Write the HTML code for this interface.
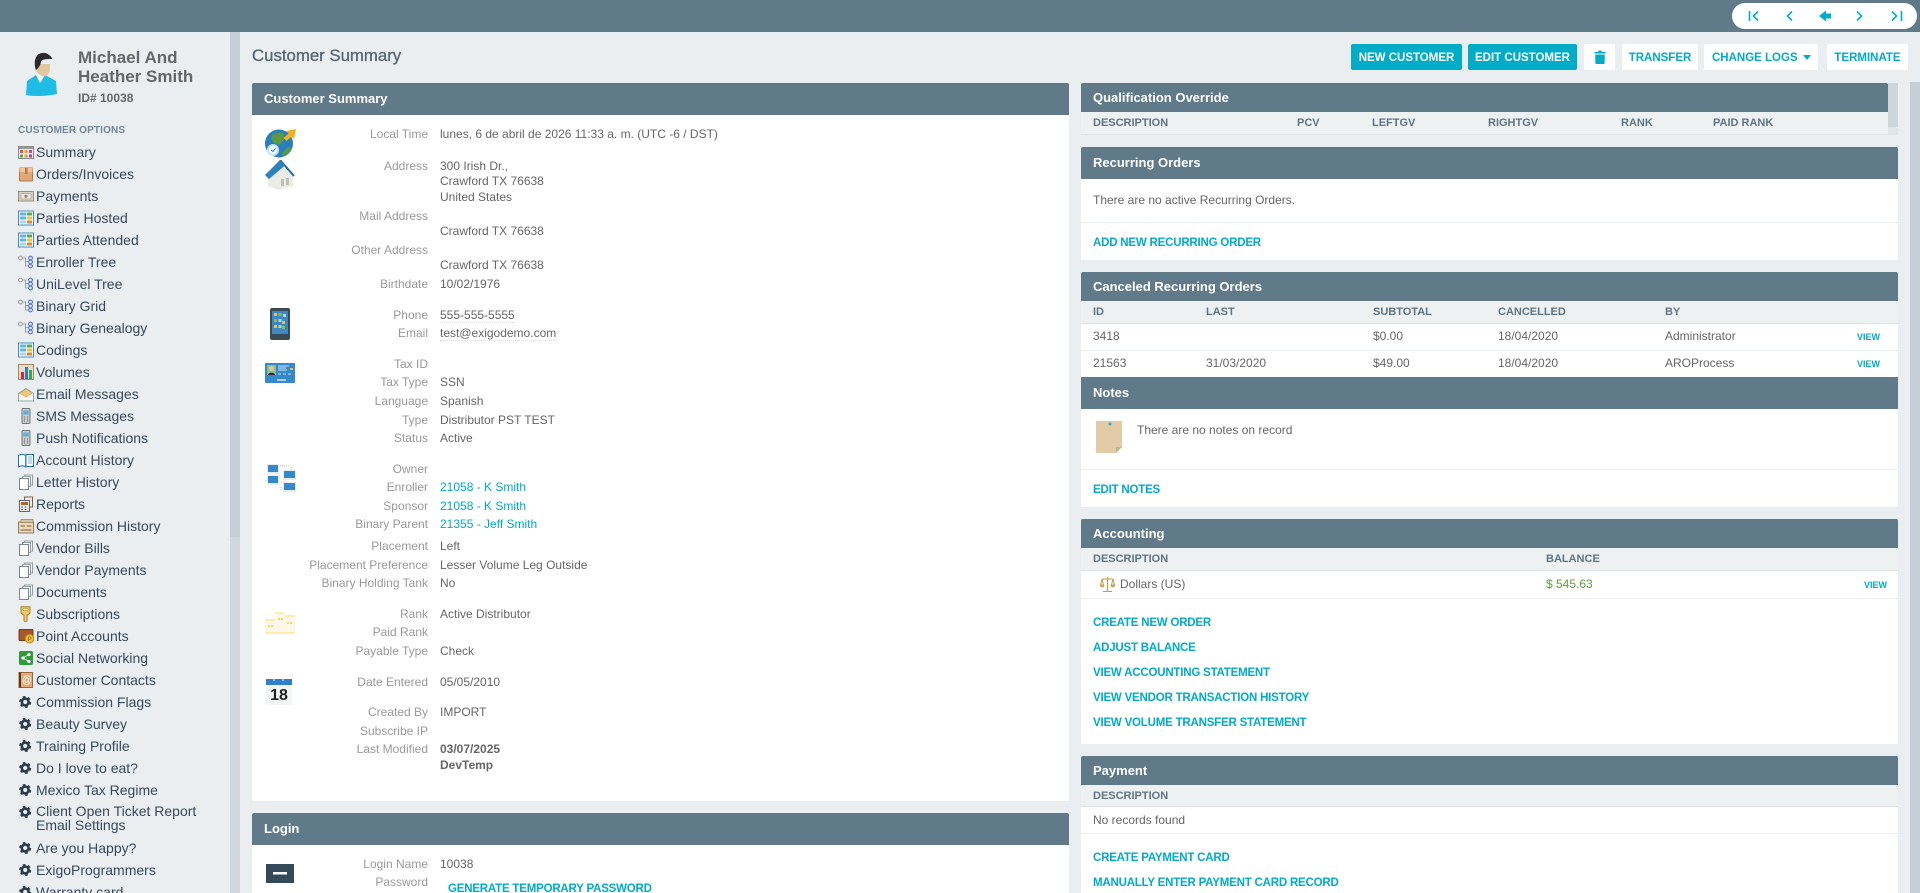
<!DOCTYPE html>
<html><head><meta charset="utf-8"><title>Customer Summary</title>
<style>
*{box-sizing:border-box}
html,body{margin:0;padding:0;width:1920px;height:893px;overflow:hidden;background:#ebeef1;font-family:"Liberation Sans",sans-serif;font-size:12px;color:#666}
div,a,svg{position:absolute}
a{text-decoration:none;color:#00acc8;white-space:nowrap}
#r{left:0;top:0;width:1920px;height:893px;overflow:hidden;background:#ebeef1}
.hd{background:#607a89;color:#fff;font-weight:bold;font-size:13px;line-height:30px;padding-left:12px;border-radius:2px 2px 0 0}
.w{background:#fff}
.th{background:#eef1f2;border-bottom:1px solid #dfe3e6}
.t{font-family:"Liberation Sans Narrow","Liberation Sans",sans-serif;font-weight:bold;font-size:11px;line-height:14px;color:#5f7583;white-space:nowrap}
.l{right:1492px;width:200px;text-align:right;color:#999;line-height:16px;white-space:nowrap}
.v{left:440px;line-height:16px;white-space:nowrap}
.k{line-height:16px;white-space:nowrap}
.lk{font-weight:bold;font-size:11.5px;line-height:16px;left:1093px;letter-spacing:-.2px;margin-top:1px}
.vw{font-size:9px;font-weight:bold;line-height:16px}
.b{top:44px;height:26px;background:#fff;border-radius:2px;color:#00acc8;font-weight:bold;font-size:11.5px;line-height:28px;text-align:center;white-space:nowrap}
.bp{background:#00acc8;color:#fff}
.m{left:36px;font-size:14px;line-height:16px;color:#36495a;white-space:nowrap}
.i{left:18px;width:16px;height:16px}
.line{height:1px;background:#eceff1}
</style></head><body>
<svg width="0" height="0" style="position:absolute">
<defs>
<symbol id="sum" viewBox="0 0 16 16"><rect x=".5" y="2.5" width="15" height="12" fill="#eee" stroke="#8a8a8a"/><rect x="1" y="3" width="14" height="2" fill="#999"/><rect x="2" y="6" width="3" height="3" fill="#d9534f"/><rect x="6.5" y="6" width="3" height="3" fill="#e0a030"/><rect x="11" y="6" width="3" height="3" fill="#c050a0"/><rect x="2" y="10.5" width="3" height="3" fill="#60a060"/><rect x="6.5" y="10.5" width="3" height="3" fill="#d9a040"/><rect x="11" y="10.5" width="3" height="3" fill="#b040b0"/></symbol>
<symbol id="box" viewBox="0 0 16 16"><rect x="1.5" y="2" width="13" height="13" rx="1" fill="#e0a878" stroke="#b47a48"/><rect x="1.5" y="2" width="13" height="4" fill="#efc39c"/><rect x="7" y="2" width="2.5" height="6" fill="#b47a48"/></symbol>
<symbol id="pay" viewBox="0 0 16 16"><rect x=".5" y="3.5" width="15" height="9.5" fill="#d8d0c4" stroke="#9b8f80"/><rect x="3" y="5.5" width="10" height="5.5" fill="#eee8dc" stroke="#a59a88" stroke-width=".6"/><circle cx="8" cy="8.2" r="1.6" fill="#888"/></symbol>
<symbol id="grid" viewBox="0 0 16 16"><rect x=".5" y="1" width="15" height="14" fill="#fff" stroke="#4a88b8"/><rect x="2" y="2.5" width="6" height="3" fill="#5db7e8"/><rect x="9" y="2.5" width="5" height="3" fill="#5aa84f"/><rect x="2" y="6.5" width="6" height="3" fill="#5db7e8"/><rect x="9" y="6.5" width="5" height="3" fill="#e8c83a"/><rect x="2" y="10.5" width="6" height="3" fill="#a8d8f0"/><rect x="9" y="10.5" width="5" height="3" fill="#d88a30"/></symbol>
<symbol id="tree" viewBox="0 0 16 16"><path d="M3 4H8.500M7.500 4V12H11M7.500 7.500H11" fill="none" stroke="#8a8f96" stroke-width=".8"/><circle cx="2.500" cy="4" r="1.900" fill="#eee" stroke="#999"/><circle cx="12.500" cy="4" r="1.900" fill="#dfe7fb" stroke="#4a68d0"/><circle cx="12.500" cy="8" r="1.900" fill="#dfe7fb" stroke="#4a68d0"/><circle cx="12.500" cy="12" r="1.900" fill="#dfe7fb" stroke="#4a68d0"/></symbol>
<symbol id="chart" viewBox="0 0 16 16"><rect x=".5" y=".5" width="15" height="15" fill="#e9dcc8" stroke="#a08868"/><rect x="3" y="8" width="3" height="7" fill="#d02a2a"/><rect x="7" y="3" width="3" height="12" fill="#2a7cc8"/><rect x="11" y="6" width="3" height="9" fill="#3aa84a"/></symbol>
<symbol id="mail" viewBox="0 0 16 16"><path d="M.5 7.500L8 2.500l7.500 5v7.500H.5z" fill="#f6f8f8" stroke="#8fa8a8"/><path d="M2 7.500L8 3l6 4.500L8 11z" fill="#f2c878" stroke="#d8a84c" stroke-width=".6"/></symbol>
<symbol id="ph" viewBox="0 0 16 16"><rect x="4" y=".5" width="8" height="15" rx="1" fill="#c9c9c9" stroke="#70787c"/><rect x="5.300" y="2.500" width="5.400" height="4" fill="#5ab0e0"/><path d="M6 9h1M9 9h1M6 11h1M9 11h1M6 13h1M9 13h1" stroke="#666"/></symbol>
<symbol id="book" viewBox="0 0 16 16"><path d="M.5 3.500C3 2 5.500 2 7.700 3.500V15C5.500 13.600 3 13.600.5 15z" fill="#f4f8fb" stroke="#2a70a8"/><path d="M8 2.500h7.500V14.500H8z" fill="#fff" stroke="#2a70a8"/><path d="M10 5h4M10 7h4M10 9h4M10 11h4" stroke="#8ab0cc"/></symbol>
<symbol id="doc" viewBox="0 0 16 16"><rect x="6.500" y="1" width="8" height="10" fill="#f8f8f8" stroke="#90a0a0"/><rect x="4.500" y="2.500" width="8" height="10" fill="#f8f8f8" stroke="#90a0a0"/><rect x="1.500" y="4.500" width="9" height="11" fill="#fff" stroke="#7a8a8a"/></symbol>
<symbol id="rep" viewBox="0 0 16 16"><rect x="6.500" y="1" width="8" height="10" fill="#eee" stroke="#806040"/><rect x="1.500" y="4.500" width="10" height="11" fill="#eee" stroke="#666"/><rect x="3" y="6" width="7" height="3" fill="#a06a30"/><path d="M3 11h2M6.500 11h2M3 13.500h2M6.500 13.500h2" stroke="#666"/></symbol>
<symbol id="com" viewBox="0 0 16 16"><rect x=".5" y="4" width="15" height="11" fill="#ead9c0" stroke="#907858"/><rect x="3" y="1.500" width="12" height="3" fill="#d8c4a4" stroke="#907858" stroke-width=".7"/><rect x="2.500" y="7" width="4.500" height="2" fill="#b89a70"/><rect x="9" y="7" width="4.500" height="2" fill="#b89a70"/><rect x="2.500" y="11" width="11" height="2" fill="#b89a70"/></symbol>
<symbol id="key" viewBox="0 0 16 16"><path d="M3 .7h9v6.500l-3 2v6l-1.500 1-1.500-1.500v-5.500l-3-2z" fill="#f0ca60" stroke="#a88428"/><rect x="5" y="2.500" width="5" height="2" fill="#fff6c8" stroke="#a88428" stroke-width=".5"/></symbol>
<symbol id="wal" viewBox="0 0 16 16"><rect x="1" y="1.500" width="14" height="11" rx="1" fill="#a5582a" stroke="#74381a"/><circle cx="11.500" cy="10.700" r="4.300" fill="#f0c040" stroke="#b88818"/><text x="11.500" y="13" font-size="6.500" font-family="Liberation Sans" fill="#a87810" text-anchor="middle" font-weight="bold">P</text></symbol>
<symbol id="soc" viewBox="0 0 16 16"><rect x="1" y="1" width="14" height="14" rx="2" fill="#2f9a38"/><path d="M11 4.500L5 8l6 3.500" fill="none" stroke="#fff"/><circle cx="11" cy="4.500" r="1.600" fill="#fff"/><circle cx="5" cy="8" r="1.600" fill="#fff"/><circle cx="11" cy="11.500" r="1.600" fill="#fff"/></symbol>
<symbol id="con" viewBox="0 0 16 16"><rect x="1" y=".5" width="13.500" height="15" fill="#e8ab78" stroke="#9a6a3a"/><rect x="1" y=".5" width="2" height="15" fill="#54381c"/><text x="9" y="11" font-size="10" font-family="Liberation Sans" fill="#fff" text-anchor="middle">@</text></symbol>
<symbol id="gear" viewBox="0 0 16 16"><circle cx="7.200" cy="8" r="3.400" fill="none" stroke="#2b3b4a" stroke-width="2.600"/><circle cx="7.200" cy="8" r="5" fill="none" stroke="#2b3b4a" stroke-width="2" stroke-dasharray="2.600 2.640"/></symbol>
</defs></svg>
<div id="r">
<!-- top bar -->
<div style="left:0;top:0;width:1920px;height:32px;background:#607a89"></div>
<div style="left:1732px;top:3px;width:185px;height:26px;background:#fff;border-radius:13px"></div>
<svg style="left:1746px;top:8px" width="160" height="16" viewBox="0 0 160 16" fill="none" stroke="#00acc8" stroke-width="1.600"><path d="M3.500 3V13M12 3.500L7.500 8l4.500 4.500"/><path d="M46 3.500L41.500 8l4.500 4.500"/><path d="M73 8L80 2.500V5.500H85V10.500H80V13.500z" fill="#00acc8" stroke="none"/><path d="M111 3.500L115.500 8l-4.500 4.500"/><path d="M146 3.500L150.500 8l-4.500 4.500M155.500 3V13"/></svg>

<!-- sidebar -->
<div style="left:230px;top:32px;width:10px;height:505px;background:#c5ced5"></div>
<div style="left:230px;top:537px;width:10px;height:356px;background:#d0d7dd"></div>
<svg style="left:25px;top:52px" width="32" height="44" viewBox="0 0 32 44"><path d="M1 43l1-14 9-6 4 4 5-4 11 6 1 13c-10 2-22 3-31 1z" fill="#1fbde5"/><path d="M11 23l4 8 5-8-4-4z" fill="#fff"/><path d="M11 12h14v6c-1 4-4 7-7 6-3 0-6-3-7-6z" fill="#e2c6a0"/><path d="M11 18c-2-5-2-13 3-16 4-2 8-1 10 1 2 1 3 3 3 4-5 0-9 0-11 2 0 3-2 7-5 9z" fill="#2a2a2c"/></svg>
<div class="k" style="left:78px;top:48px;font-size:17px;font-weight:bold;line-height:19px;color:#666">Michael And<br>Heather Smith</div>
<div class="k" style="left:78px;top:90px;font-size:12px;font-weight:bold;color:#666">ID# 10038</div>
<div class="k" style="left:18px;top:123px;font-size:10px;font-weight:bold;color:#6f8796;letter-spacing:.15px">CUSTOMER OPTIONS</div>

<svg class="i" style="top:144px"><use href="#sum"/></svg><div class="m" style="top:144px">Summary</div>
<svg class="i" style="top:166px"><use href="#box"/></svg><div class="m" style="top:166px">Orders/Invoices</div>
<svg class="i" style="top:188px"><use href="#pay"/></svg><div class="m" style="top:188px">Payments</div>
<svg class="i" style="top:210px"><use href="#grid"/></svg><div class="m" style="top:210px">Parties Hosted</div>
<svg class="i" style="top:232px"><use href="#grid"/></svg><div class="m" style="top:232px">Parties Attended</div>
<svg class="i" style="top:254px"><use href="#tree"/></svg><div class="m" style="top:254px">Enroller Tree</div>
<svg class="i" style="top:276px"><use href="#tree"/></svg><div class="m" style="top:276px">UniLevel Tree</div>
<svg class="i" style="top:298px"><use href="#tree"/></svg><div class="m" style="top:298px">Binary Grid</div>
<svg class="i" style="top:320px"><use href="#tree"/></svg><div class="m" style="top:320px">Binary Genealogy</div>
<svg class="i" style="top:342px"><use href="#grid"/></svg><div class="m" style="top:342px">Codings</div>
<svg class="i" style="top:364px"><use href="#chart"/></svg><div class="m" style="top:364px">Volumes</div>
<svg class="i" style="top:386px"><use href="#mail"/></svg><div class="m" style="top:386px">Email Messages</div>
<svg class="i" style="top:408px"><use href="#ph"/></svg><div class="m" style="top:408px">SMS Messages</div>
<svg class="i" style="top:430px"><use href="#ph"/></svg><div class="m" style="top:430px">Push Notifications</div>
<svg class="i" style="top:452px"><use href="#book"/></svg><div class="m" style="top:452px">Account History</div>
<svg class="i" style="top:474px"><use href="#doc"/></svg><div class="m" style="top:474px">Letter History</div>
<svg class="i" style="top:496px"><use href="#rep"/></svg><div class="m" style="top:496px">Reports</div>
<svg class="i" style="top:518px"><use href="#com"/></svg><div class="m" style="top:518px">Commission History</div>
<svg class="i" style="top:540px"><use href="#doc"/></svg><div class="m" style="top:540px">Vendor Bills</div>
<svg class="i" style="top:562px"><use href="#doc"/></svg><div class="m" style="top:562px">Vendor Payments</div>
<svg class="i" style="top:584px"><use href="#doc"/></svg><div class="m" style="top:584px">Documents</div>
<svg class="i" style="top:606px"><use href="#key"/></svg><div class="m" style="top:606px">Subscriptions</div>
<svg class="i" style="top:628px"><use href="#wal"/></svg><div class="m" style="top:628px">Point Accounts</div>
<svg class="i" style="top:650px"><use href="#soc"/></svg><div class="m" style="top:650px">Social Networking</div>
<svg class="i" style="top:672px"><use href="#con"/></svg><div class="m" style="top:672px">Customer Contacts</div>
<svg class="i" style="top:694px"><use href="#gear"/></svg><div class="m" style="top:694px">Commission Flags</div>
<svg class="i" style="top:716px"><use href="#gear"/></svg><div class="m" style="top:716px">Beauty Survey</div>
<svg class="i" style="top:738px"><use href="#gear"/></svg><div class="m" style="top:738px">Training Profile</div>
<svg class="i" style="top:760px"><use href="#gear"/></svg><div class="m" style="top:760px">Do I love to eat?</div>
<svg class="i" style="top:782px"><use href="#gear"/></svg><div class="m" style="top:782px">Mexico Tax Regime</div>
<svg class="i" style="top:804px"><use href="#gear"/></svg><div class="m" style="top:804px;line-height:14px">Client Open Ticket Report<br>Email Settings</div>
<svg class="i" style="top:840px"><use href="#gear"/></svg><div class="m" style="top:840px">Are you Happy?</div>
<svg class="i" style="top:862px"><use href="#gear"/></svg><div class="m" style="top:862px">ExigoProgrammers</div>
<svg class="i" style="top:884px"><use href="#gear"/></svg><div class="m" style="top:884px">Warranty card</div>

<!-- page title + buttons -->
<div class="k" style="left:252px;top:45px;font-size:16.800px;line-height:22px;color:#556672;-webkit-text-stroke:.3px #556672">Customer Summary</div>
<div class="b bp" style="left:1351px;width:111px">NEW CUSTOMER</div>
<div class="b bp" style="left:1468px;width:109px">EDIT CUSTOMER</div>
<div class="b" style="left:1584px;width:31px"></div>
<svg style="left:1594px;top:50px" width="12" height="14" viewBox="0 0 12 14"><path d="M.5 2h3.500l.7-1.500h2.600L8 2h3.500v1.500H.5zM1.300 4.500h9.400V13a1 1 0 0 1-1 1H2.300a1 1 0 0 1-1-1z" fill="#00acc8"/></svg>
<div class="b" style="left:1622px;width:76px">TRANSFER</div>
<div class="b" style="left:1704px;width:114px;text-align:left;padding-left:8px">CHANGE LOGS</div>
<svg style="left:1803px;top:55px" width="8" height="5" viewBox="0 0 8 5"><path d="M0 0h8L4 5z" fill="#00acc8"/></svg>
<div class="b" style="left:1827px;width:81px">TERMINATE</div>

<!-- left panels -->
<div class="w" style="left:252px;top:83px;width:817px;height:718px;border-radius:2px"></div>
<div class="hd" style="left:252px;top:83px;width:817px;height:32px;line-height:32px">Customer Summary</div>

<svg style="left:264px;top:129px" width="32" height="29" viewBox="0 0 32 29"><circle cx="15" cy="14.500" r="14" fill="#2a7dbf"/><path d="M8 6c4-3 9-3 11-2l2 5-5 7-6-2-3-4z" fill="#5b9a44"/><path d="M18 24l6-6 3 1c-1 5-5 8-9 8z" fill="#5b9a44"/><path d="M32 0l-2 10-2.500-2.500-5 4.500-3-3 5-4.500L22 2z" fill="#f5b021"/><circle cx="9" cy="21" r="6" fill="#bfe8f7"/><circle cx="9" cy="21" r="4" fill="#fff"/><path d="M7 21l2 1.500 2.500-3" fill="none" stroke="#2a7dbf"/></svg>
<svg style="left:265px;top:160px" width="30" height="30" viewBox="0 0 30 30"><path d="M3 15L15 5l13 10v11l-14 4-11-4z" fill="#ecece6"/><path d="M16 19h3v7h-3zM21 18h3v7h-3z" fill="#bfbfb6"/><path d="M15 0L29 16" stroke="#1f6aa8" stroke-width="2"/><path d="M0 15L15 0l5 5.500L4 19z" fill="#2f80c2"/></svg>
<svg style="left:270px;top:308px" width="20" height="32" viewBox="0 0 20 32"><rect width="20" height="32" rx="2" fill="#3a4a55"/><rect x="2" y="3" width="16" height="23" fill="#3f86c4"/><g fill="#f5c325"><rect x="4" y="5" width="3" height="3"/><rect x="12" y="13" width="3" height="3"/><rect x="4" y="17" width="3" height="3"/></g><g fill="#8bc34a"><rect x="8.500" y="5" width="3" height="3"/><rect x="4" y="11" width="3" height="3"/><rect x="12" y="18" width="3" height="3"/></g><g fill="#9fdcf0"><rect x="13" y="6" width="3" height="3"/><rect x="8.500" y="11" width="3" height="3"/><rect x="8.500" y="17" width="3" height="3"/></g></svg>
<svg style="left:265px;top:363px" width="30" height="20" viewBox="0 0 30 20"><rect width="30" height="20" rx="1" fill="#3389cc"/><rect x="2" y="2" width="9" height="10" fill="#8bc18a"/><circle cx="6.500" cy="5.500" r="2.400" fill="#e2c6a0"/><path d="M3 12c0-3 7-3 7 0z" fill="#324"/><path d="M13 3h11M13 5h8M13 7h9" stroke="#cfe6f6"/><rect x="25" y="5" width="3" height="2" fill="#f5c325"/><path d="M13 11h3M18 11h3M23 11h3" stroke="#cfe6f6"/><rect x="12" y="16" width="9" height="2" fill="#a6cfe9"/></svg>
<svg style="left:264px;top:464px" width="32" height="28" viewBox="0 0 32 28"><path d="M12 2h14M27 3v5M1 17h3M17 18h3M17 23v4" stroke="#bbb" stroke-dasharray="1 1"/><g fill="#e6eef4"><rect x="3" width="12" height="10"/><rect x="3" y="11" width="12" height="10"/><rect x="19" y="6" width="13" height="10"/><rect x="19" y="18" width="13" height="10"/></g><g fill="#3389cc"><rect x="4" y="1" width="10" height="7"/><rect x="4" y="12" width="10" height="7"/><rect x="20" y="7" width="11" height="7"/><rect x="20" y="19" width="11" height="7"/></g></svg>
<svg style="left:265px;top:612px" width="30" height="22" viewBox="0 0 30 22"><g fill="#fdf8e6"><rect x="11" y="1" width="9" height="20"/><rect y="8" width="10" height="13"/><rect x="20" y="4" width="10" height="17"/></g><path d="M10 1h9M0 8h10M20 4h10M0 21h30" stroke="#fbe389" stroke-width="1.200"/><g fill="#f2cc55"><circle cx="14" cy="7" r="1"/><circle cx="17" cy="7" r="1"/><circle cx="4" cy="14" r="1"/><circle cx="7" cy="14" r="1"/><circle cx="23" cy="11" r="1"/><circle cx="26" cy="11" r="1"/></g></svg>
<svg style="left:266px;top:679px" width="26" height="26" viewBox="0 0 26 26"><rect width="26" height="26" fill="#f3f4f4"/><rect width="26" height="6" fill="#2f80c8"/><path d="M8 0v2M17 0v2" stroke="#fff"/><text x="13" y="21" font-family="Liberation Sans" font-size="16" font-weight="bold" fill="#222" text-anchor="middle">18</text></svg>

<div class="l" style="top:126px">Local Time</div><div class="v" style="top:126px">lunes, 6 de abril de 2026 11:33 a. m. (UTC -6 / DST)</div>
<div class="l" style="top:158px">Address</div><div class="v" style="top:158px">300 Irish Dr.,</div><div class="v" style="top:173px">Crawford TX 76638</div><div class="v" style="top:189px">United States</div>
<div class="l" style="top:208px">Mail Address</div><div class="v" style="top:223px">Crawford TX 76638</div>
<div class="l" style="top:242px">Other Address</div><div class="v" style="top:257px">Crawford TX 76638</div>
<div class="l" style="top:276px">Birthdate</div><div class="v" style="top:276px">10/02/1976</div>
<div class="l" style="top:307px">Phone</div><div class="v" style="top:307px;border-bottom:1px dotted #ddd;height:16px">555-555-5555</div>
<div class="l" style="top:325px">Email</div><div class="v" style="top:325px;border-bottom:1px dotted #ddd;height:16px">test@exigodemo.com</div>
<div class="l" style="top:356px">Tax ID</div>
<div class="l" style="top:374px">Tax Type</div><div class="v" style="top:374px">SSN</div>
<div class="l" style="top:393px">Language</div><div class="v" style="top:393px">Spanish</div>
<div class="l" style="top:412px">Type</div><div class="v" style="top:412px">Distributor PST TEST</div>
<div class="l" style="top:430px">Status</div><div class="v" style="top:430px">Active</div>
<div class="l" style="top:461px">Owner</div>
<div class="l" style="top:479px">Enroller</div><a class="v" style="top:479px">21058 - K Smith</a>
<div class="l" style="top:498px">Sponsor</div><a class="v" style="top:498px">21058 - K Smith</a>
<div class="l" style="top:516px">Binary Parent</div><a class="v" style="top:516px">21355 - Jeff Smith</a>
<div class="l" style="top:538px">Placement</div><div class="v" style="top:538px">Left</div>
<div class="l" style="top:557px">Placement Preference</div><div class="v" style="top:557px">Lesser Volume Leg Outside</div>
<div class="l" style="top:575px">Binary Holding Tank</div><div class="v" style="top:575px">No</div>
<div class="l" style="top:606px">Rank</div><div class="v" style="top:606px">Active Distributor</div>
<div class="l" style="top:624px">Paid Rank</div>
<div class="l" style="top:643px">Payable Type</div><div class="v" style="top:643px">Check</div>
<div class="l" style="top:674px">Date Entered</div><div class="v" style="top:674px">05/05/2010</div>
<div class="l" style="top:704px">Created By</div><div class="v" style="top:704px">IMPORT</div>
<div class="l" style="top:723px">Subscribe IP</div>
<div class="l" style="top:741px">Last Modified</div><div class="v" style="top:741px;font-weight:bold">03/07/2025</div><div class="v" style="top:757px;font-weight:bold">DevTemp</div>

<div class="w" style="left:252px;top:813px;width:817px;height:80px"></div>
<div class="hd" style="left:252px;top:813px;width:817px;height:32px;line-height:32px">Login</div>
<svg style="left:266px;top:864px" width="28" height="19" viewBox="0 0 28 19"><rect width="28" height="19" fill="#34495a"/><rect x="7" y="8" width="14" height="2.500" fill="#fff"/></svg>
<div class="l" style="top:856px">Login Name</div><div class="v" style="top:856px">10038</div>
<div class="l" style="top:874px">Password</div>
<a class="lk" style="left:448px;top:880px">GENERATE TEMPORARY PASSWORD</a>

<!-- right column -->
<div style="left:1910px;top:82px;width:10px;height:811px;background:#c5ced5"></div>

<div class="hd" style="left:1081px;top:83px;width:807px;height:29px;line-height:29px">Qualification Override</div>
<div class="th" style="left:1081px;top:112px;width:807px;height:23px"></div>
<div style="left:1888px;top:83px;width:10px;height:44px;background:#ced6db"></div>
<div style="left:1888px;top:127px;width:10px;height:8px;background:#e0e5e8"></div>
<div class="t" style="left:1093px;top:116px">DESCRIPTION</div><div class="t" style="left:1297px;top:116px">PCV</div><div class="t" style="left:1372px;top:116px">LEFTGV</div><div class="t" style="left:1488px;top:116px">RIGHTGV</div><div class="t" style="left:1621px;top:116px">RANK</div><div class="t" style="left:1713px;top:116px">PAID RANK</div>

<div class="w" style="left:1081px;top:147px;width:817px;height:113px;border-radius:2px"></div>
<div class="hd" style="left:1081px;top:147px;width:817px;height:32px;line-height:32px">Recurring Orders</div>
<div class="k" style="left:1093px;top:192px">There are no active Recurring Orders.</div>
<div class="line" style="left:1081px;top:222px;width:817px"></div>
<a class="lk" style="top:234px">ADD NEW RECURRING ORDER</a>

<div class="hd" style="left:1081px;top:272px;width:817px;height:29px;line-height:29px">Canceled Recurring Orders</div>
<div class="th" style="left:1081px;top:301px;width:817px;height:23px"></div>
<div class="t" style="left:1093px;top:305px">ID</div><div class="t" style="left:1206px;top:305px">LAST</div><div class="t" style="left:1373px;top:305px">SUBTOTAL</div><div class="t" style="left:1498px;top:305px">CANCELLED</div><div class="t" style="left:1665px;top:305px">BY</div>
<div class="w" style="left:1081px;top:324px;width:817px;height:53px"></div>
<div class="line" style="left:1081px;top:350px;width:817px"></div>
<div class="k" style="left:1093px;top:328px">3418</div><div class="k" style="left:1373px;top:328px">$0.00</div><div class="k" style="left:1498px;top:328px">18/04/2020</div><div class="k" style="left:1665px;top:328px">Administrator</div><a class="vw" style="left:1857px;top:329px">VIEW</a>
<div class="k" style="left:1093px;top:355px">21563</div><div class="k" style="left:1206px;top:355px">31/03/2020</div><div class="k" style="left:1373px;top:355px">$49.00</div><div class="k" style="left:1498px;top:355px">18/04/2020</div><div class="k" style="left:1665px;top:355px">AROProcess</div><a class="vw" style="left:1857px;top:356px">VIEW</a>

<div class="w" style="left:1081px;top:377px;width:817px;height:130px;border-radius:2px"></div>
<div class="hd" style="left:1081px;top:377px;width:817px;height:32px;line-height:32px;border-radius:0">Notes</div>
<svg style="left:1096px;top:421px" width="26" height="32" viewBox="0 0 26 32"><path d="M0 0h26v26l-6 6H0z" fill="#e3cba7"/><path d="M20 32v-6h6z" fill="#bfb58f"/><circle cx="14" cy="3" r="1.500" fill="#18b4d8"/></svg>
<div class="k" style="left:1137px;top:422px">There are no notes on record</div>
<div class="line" style="left:1081px;top:469px;width:817px"></div>
<a class="lk" style="top:481px">EDIT NOTES</a>

<div class="hd" style="left:1081px;top:519px;width:817px;height:29px;line-height:29px">Accounting</div>
<div class="th" style="left:1081px;top:548px;width:817px;height:23px"></div>
<div class="t" style="left:1093px;top:552px">DESCRIPTION</div><div class="t" style="left:1546px;top:552px">BALANCE</div>
<div class="w" style="left:1081px;top:571px;width:817px;height:173px;border-radius:0 0 2px 2px"></div>
<svg style="left:1100px;top:576px" width="15" height="16" viewBox="0 0 15 16" fill="none" stroke="#c49a4a"><path d="M7.500 1v14M3 15.500h9M2 3h11M2 3L.5 9h3zM13 3l-1.500 6h3z"/><path d="M.5 9.500c.5 2 3 2 3.500 0M11 9.500c.5 2 3 2 3.500 0" fill="#e3c078"/></svg>
<div class="k" style="left:1120px;top:576px">Dollars (US)</div>
<div class="k" style="left:1546px;top:576px;color:#5a9f3e">$ 545.63</div>
<a class="vw" style="left:1864px;top:577px">VIEW</a>
<div class="line" style="left:1081px;top:598px;width:817px"></div>
<a class="lk" style="top:614px">CREATE NEW ORDER</a>
<a class="lk" style="top:639px">ADJUST BALANCE</a>
<a class="lk" style="top:664px">VIEW ACCOUNTING STATEMENT</a>
<a class="lk" style="top:689px">VIEW VENDOR TRANSACTION HISTORY</a>
<a class="lk" style="top:714px">VIEW VOLUME TRANSFER STATEMENT</a>

<div class="hd" style="left:1081px;top:756px;width:817px;height:29px;line-height:29px">Payment</div>
<div class="th" style="left:1081px;top:785px;width:817px;height:22px"></div>
<div class="t" style="left:1093px;top:789px">DESCRIPTION</div>
<div class="w" style="left:1081px;top:807px;width:817px;height:86px"></div>
<div class="k" style="left:1093px;top:812px">No records found</div>
<div class="line" style="left:1081px;top:833px;width:817px"></div>
<a class="lk" style="top:849px">CREATE PAYMENT CARD</a>
<a class="lk" style="top:874px">MANUALLY ENTER PAYMENT CARD RECORD</a>
</div>
</body></html>
